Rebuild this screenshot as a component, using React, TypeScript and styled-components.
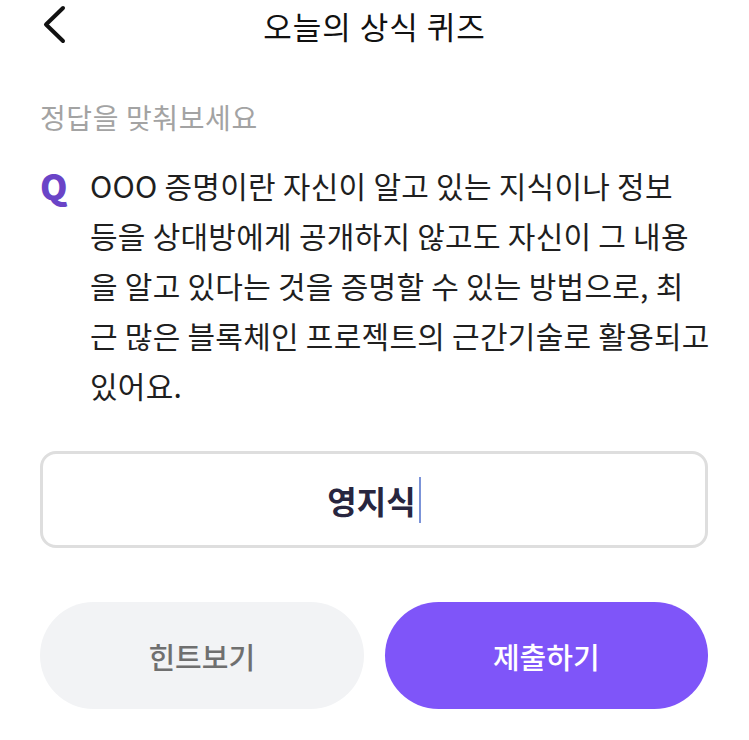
import styled, { createGlobalStyle } from 'styled-components';

const GlobalStyle = createGlobalStyle`
  html, body {
    margin: 0;
    padding: 0;
    background: #ffffff;
  }
  body {
    font-family: 'Noto Sans CJK KR', 'Noto Sans', sans-serif;
    color: #222222;
  }
`;

const QUESTION_LINES = [
  'OOO 증명이란 자신이 알고 있는 지식이나 정보',
  '등을 상대방에게 공개하지 않고도 자신이 그 내용',
  '을 알고 있다는 것을 증명할 수 있는 방법으로, 최',
  '근 많은 블록체인 프로젝트의 근간기술로 활용되고',
  '있어요.',
];

const Page = styled.div`
  width: 749px;
  min-height: 740px;
  box-sizing: border-box;
  padding-bottom: 31px;
`;

const Header = styled.header`
  display: grid;
  grid-template-columns: 1fr auto 1fr;
  align-items: center;
  height: 50px;
`;

const BackButton = styled.button`
  justify-self: start;
  display: flex;
  align-items: center;
  margin-left: 41px;
  padding: 0;
  border: none;
  background: none;
  cursor: pointer;
`;

const Title = styled.h1`
  margin: 0;
  font-size: 31px;
  font-weight: 400;
  color: #111111;
  letter-spacing: 1px;
  line-height: 1;
`;

const Body = styled.main`
  padding: 0 41px 0 40px;
`;

const Hint = styled.p`
  margin: 49px 0 0;
  font-size: 28px;
  line-height: 36px;
  letter-spacing: 0.6px;
  color: #a3a3a3;
`;

const Question = styled.div`
  display: flex;
  margin-top: 25px;
`;

const QMark = styled.span`
  flex: 0 0 50px;
  font-size: 35px;
  font-weight: 800;
  line-height: 50px;
  color: #6a44c7;
`;

const QText = styled.p`
  margin: 0;
  font-size: 30px;
  line-height: 50px;
  letter-spacing: 0.25px;
  color: #1f1f1f;
`;

const QLine = styled.span`
  display: block;
  white-space: nowrap;
`;

const AnswerBox = styled.div`
  display: flex;
  align-items: center;
  justify-content: center;
  height: 97px;
  margin-top: 41px;
  box-sizing: border-box;
  border: 3px solid #dedede;
  border-radius: 16px;
  background: #ffffff;
`;

const AnswerText = styled.span`
  font-size: 32px;
  font-weight: 700;
  color: #28263f;
`;

const Caret = styled.span`
  display: inline-block;
  width: 2px;
  height: 46px;
  margin-left: 3px;
  background: #7b93d8;
`;

const Actions = styled.div`
  display: grid;
  grid-template-columns: 1fr 1fr;
  gap: 21px;
  margin-top: 54px;
`;

const ActionButton = styled.button<{ $primary?: boolean }>`
  height: 107px;
  border: none;
  border-radius: 54px;
  font-family: 'Noto Sans CJK KR', 'Noto Sans', sans-serif;
  font-size: 29px;
  font-weight: 500;
  cursor: pointer;
  background: ${({ $primary }) => ($primary ? '#7f55f9' : '#f2f3f5')};
  color: ${({ $primary }) => ($primary ? '#ffffff' : '#6f6f6f')};
`;

function ChevronLeft() {
  return (
    <svg width="26" height="40" viewBox="0 0 26 40" fill="none">
      <path
        d="M22 3 L5 19.5 L22 36"
        stroke="#111111"
        strokeWidth="4"
        strokeLinecap="round"
        strokeLinejoin="round"
      />
    </svg>
  );
}

export default function App() {
  return (
    <Page>
      <GlobalStyle />
      <Header>
        <BackButton aria-label="뒤로">
          <ChevronLeft />
        </BackButton>
        <Title>오늘의 상식 퀴즈</Title>
        <span />
      </Header>
      <Body>
        <Hint>정답을 맞춰보세요</Hint>
        <Question>
          <QMark>Q</QMark>
          <QText>
            {QUESTION_LINES.map((line) => (
              <QLine key={line}>{line}</QLine>
            ))}
          </QText>
        </Question>
        <AnswerBox>
          <AnswerText>영지식</AnswerText>
          <Caret />
        </AnswerBox>
        <Actions>
          <ActionButton>힌트보기</ActionButton>
          <ActionButton $primary>제출하기</ActionButton>
        </Actions>
      </Body>
    </Page>
  );
}
